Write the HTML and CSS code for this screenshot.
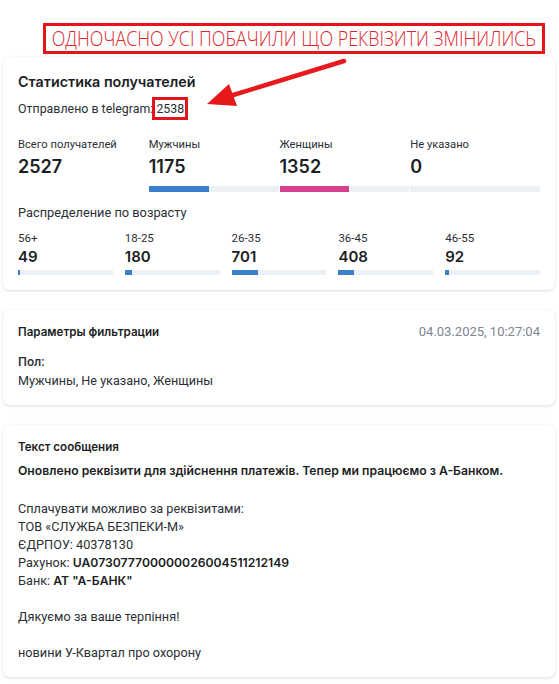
FILE: index.html
```html
<!DOCTYPE html>
<html lang="ru">
<head>
<meta charset="utf-8">
<link rel="stylesheet" href="styles.css">
</head>
<body>
<main class="page">
  <section class="card stats">
    <h2 class="card-title">Статистика получателей</h2>
    <p class="sent">Отправлено в telegram: <span class="sent-count">2538</span></p>

    <div class="gender-grid">
      <div class="gender-col">
        <div class="stat-label">Всего получателей</div>
        <div class="stat-value">2527</div>
      </div>
      <div class="gender-col">
        <div class="stat-label">Мужчины</div>
        <div class="stat-value">1175</div>
        <div class="track"><div class="fill fill-blue" style="width:46.5%"></div></div>
      </div>
      <div class="gender-col">
        <div class="stat-label">Женщины</div>
        <div class="stat-value">1352</div>
        <div class="track"><div class="fill fill-pink" style="width:53.5%"></div></div>
      </div>
      <div class="gender-col">
        <div class="stat-label">Не указано</div>
        <div class="stat-value">0</div>
        <div class="track"><div class="fill fill-blue" style="width:0%"></div></div>
      </div>
    </div>

    <h3 class="section-title">Распределение по возрасту</h3>
    <div class="age-grid">
      <div class="age-col">
        <div class="age-label">56+</div>
        <div class="age-value">49</div>
        <div class="track thin"><div class="fill fill-blue" style="width:1.9%"></div></div>
      </div>
      <div class="age-col">
        <div class="age-label">18-25</div>
        <div class="age-value">180</div>
        <div class="track thin"><div class="fill fill-blue" style="width:7.1%"></div></div>
      </div>
      <div class="age-col">
        <div class="age-label">26-35</div>
        <div class="age-value">701</div>
        <div class="track thin"><div class="fill fill-blue" style="width:27.7%"></div></div>
      </div>
      <div class="age-col">
        <div class="age-label">36-45</div>
        <div class="age-value">408</div>
        <div class="track thin"><div class="fill fill-blue" style="width:16.1%"></div></div>
      </div>
      <div class="age-col">
        <div class="age-label">46-55</div>
        <div class="age-value">92</div>
        <div class="track thin"><div class="fill fill-blue" style="width:3.6%"></div></div>
      </div>
    </div>
  </section>

  <section class="card filters">
    <div class="filters-head">
      <h2 class="small-title">Параметры фильтрации</h2>
      <span class="date">04.03.2025, 10:27:04</span>
    </div>
    <div class="filter-name">Пол:</div>
    <div class="filter-value">Мужчины, Не указано, Женщины</div>
  </section>

  <section class="card message">
    <h2 class="small-title">Текст сообщения</h2>
    <p class="msg-lead">Оновлено реквізити для здійснення платежів. Тепер ми працюємо з А-Банком.</p>
    <div class="msg-body">Сплачувати можливо за реквізитами:<br>ТОВ «СЛУЖБА БЕЗПЕКИ-М»<br>ЄДРПОУ: 40378130<br>Рахунок: <b>UA073077700000026004511212149</b><br>Банк: <b>АТ "А-БАНК"</b><br><br>Дякуємо за ваше терпіння!<br><br>новини У-Квартал про охорону</div>
  </section>
</main>

<div class="note"><span class="note-text">ОДНОЧАСНО УСІ ПОБАЧИЛИ ЩО РЕКВІЗИТИ ЗМІНИЛИСЬ</span></div>
<svg class="arrow" width="559" height="130" viewBox="0 0 559 130">
  <line x1="344" y1="61" x2="230" y2="96" stroke="#e8191c" stroke-width="4.5" stroke-linecap="round"/>
  <polygon points="207,104 229,84 237,106" fill="#e8191c"/>
</svg>
</body>
</html>
```
FILE: styles.css
```css
* { box-sizing: border-box; }
html, body { margin: 0; padding: 0; background: #fff; }
body {
  font-family: Inter, "Noto Sans", "Liberation Sans", sans-serif;
  color: #1e2126;
  width: 559px;
  height: 684px;
  overflow: hidden;
  position: relative;
}
.page {
  padding: 57px 4px 0 3px;
  display: flex;
  flex-direction: column;
  gap: 20px;
}
.card {
  background: #fff;
  border-radius: 6px;
  box-shadow: 0 1px 3px rgba(0,0,0,0.13), 0 0 1px rgba(0,0,0,0.08);
  padding: 15px;
}
.sent, .stat-label, .section-title, .age-label, .date,
.filter-name, .filter-value, .msg-body {
  font-family: Roboto, "Liberation Sans", sans-serif;
}
.card-title {
  margin: 0;
  font-size: 14.3px;
  line-height: 20px;
  font-weight: 600;
  color: #1b1e23;
}
.sent {
  margin: 8px 0 0;
  font-size: 12.4px;
  line-height: 18px;
  color: #2b2f35;
}
.sent-count {
  outline: 3px solid #e3161b;
  outline-offset: 1px;
}
.gender-grid {
  margin-top: 19px;
  display: grid;
  grid-template-columns: repeat(4, 1fr);
  column-gap: 1px;
}
.stat-label {
  font-size: 11.2px;
  line-height: 16px;
  color: #2b2f35;
}
.stat-value {
  margin-top: 2px;
  font-size: 18px;
  line-height: 24px;
  font-weight: 600;
  color: #1b1e23;
}
.track {
  margin-top: 7px;
  height: 6px;
  background: #ebf0f5;
  overflow: hidden;
}
.track.thin {
  margin-top: 3px;
  height: 5px;
}
.fill { height: 100%; }
.fill-blue { background: #3a80cc; }
.fill-pink { background: #d63f8c; }
.section-title {
  margin: 12px 0 0;
  font-size: 12.8px;
  line-height: 18px;
  font-weight: 400;
  color: #2b2f35;
}
.age-grid {
  margin-top: 8px;
  display: grid;
  grid-template-columns: repeat(5, 1fr);
  column-gap: 12px;
}
.age-label {
  font-size: 11.5px;
  line-height: 16px;
  color: #2b2f35;
}
.age-value {
  margin-top: 1px;
  font-size: 15px;
  line-height: 20px;
  font-weight: 600;
  color: #1b1e23;
}
.filters-head {
  display: flex;
  justify-content: space-between;
  align-items: center;
}
.small-title {
  margin: 0;
  font-size: 11.6px;
  line-height: 14px;
  font-weight: 600;
  color: #1b1e23;
}
.date {
  font-size: 13px;
  line-height: 14px;
  color: #7d8593;
}
.filter-name {
  margin-top: 13px;
  font-size: 12.6px;
  line-height: 19px;
  font-weight: 500;
  color: #2b2f35;
}
.filter-value {
  font-size: 12.6px;
  line-height: 19px;
  color: #2b2f35;
}
.msg-lead {
  margin: 8px 0 0;
  font-size: 12.2px;
  line-height: 18px;
  font-weight: 600;
  color: #1b1e23;
}
.msg-body {
  margin-top: 20px;
  font-size: 12.7px;
  line-height: 18px;
  color: #2b2f35;
}
.msg-body b {
  font-family: Inter, "Noto Sans", sans-serif;
  font-size: 12.2px;
  font-weight: 600;
  color: #1b1e23;
}

.note {
  position: absolute;
  left: 43px;
  top: 23px;
  width: 502px;
  height: 31px;
  border: 3px solid #e3161b;
  background: #fff;
  display: flex;
  align-items: center;
  justify-content: center;
  overflow: hidden;
}
.note-text {
  font-family: "Open Sans", "Liberation Sans", sans-serif;
  font-weight: 300;
  font-size: 21px;
  line-height: 25px;
  color: #e0242a;
  white-space: nowrap;
  transform: scaleX(0.85);
}
.arrow {
  position: absolute;
  left: 0;
  top: 0;
  pointer-events: none;
}
```
